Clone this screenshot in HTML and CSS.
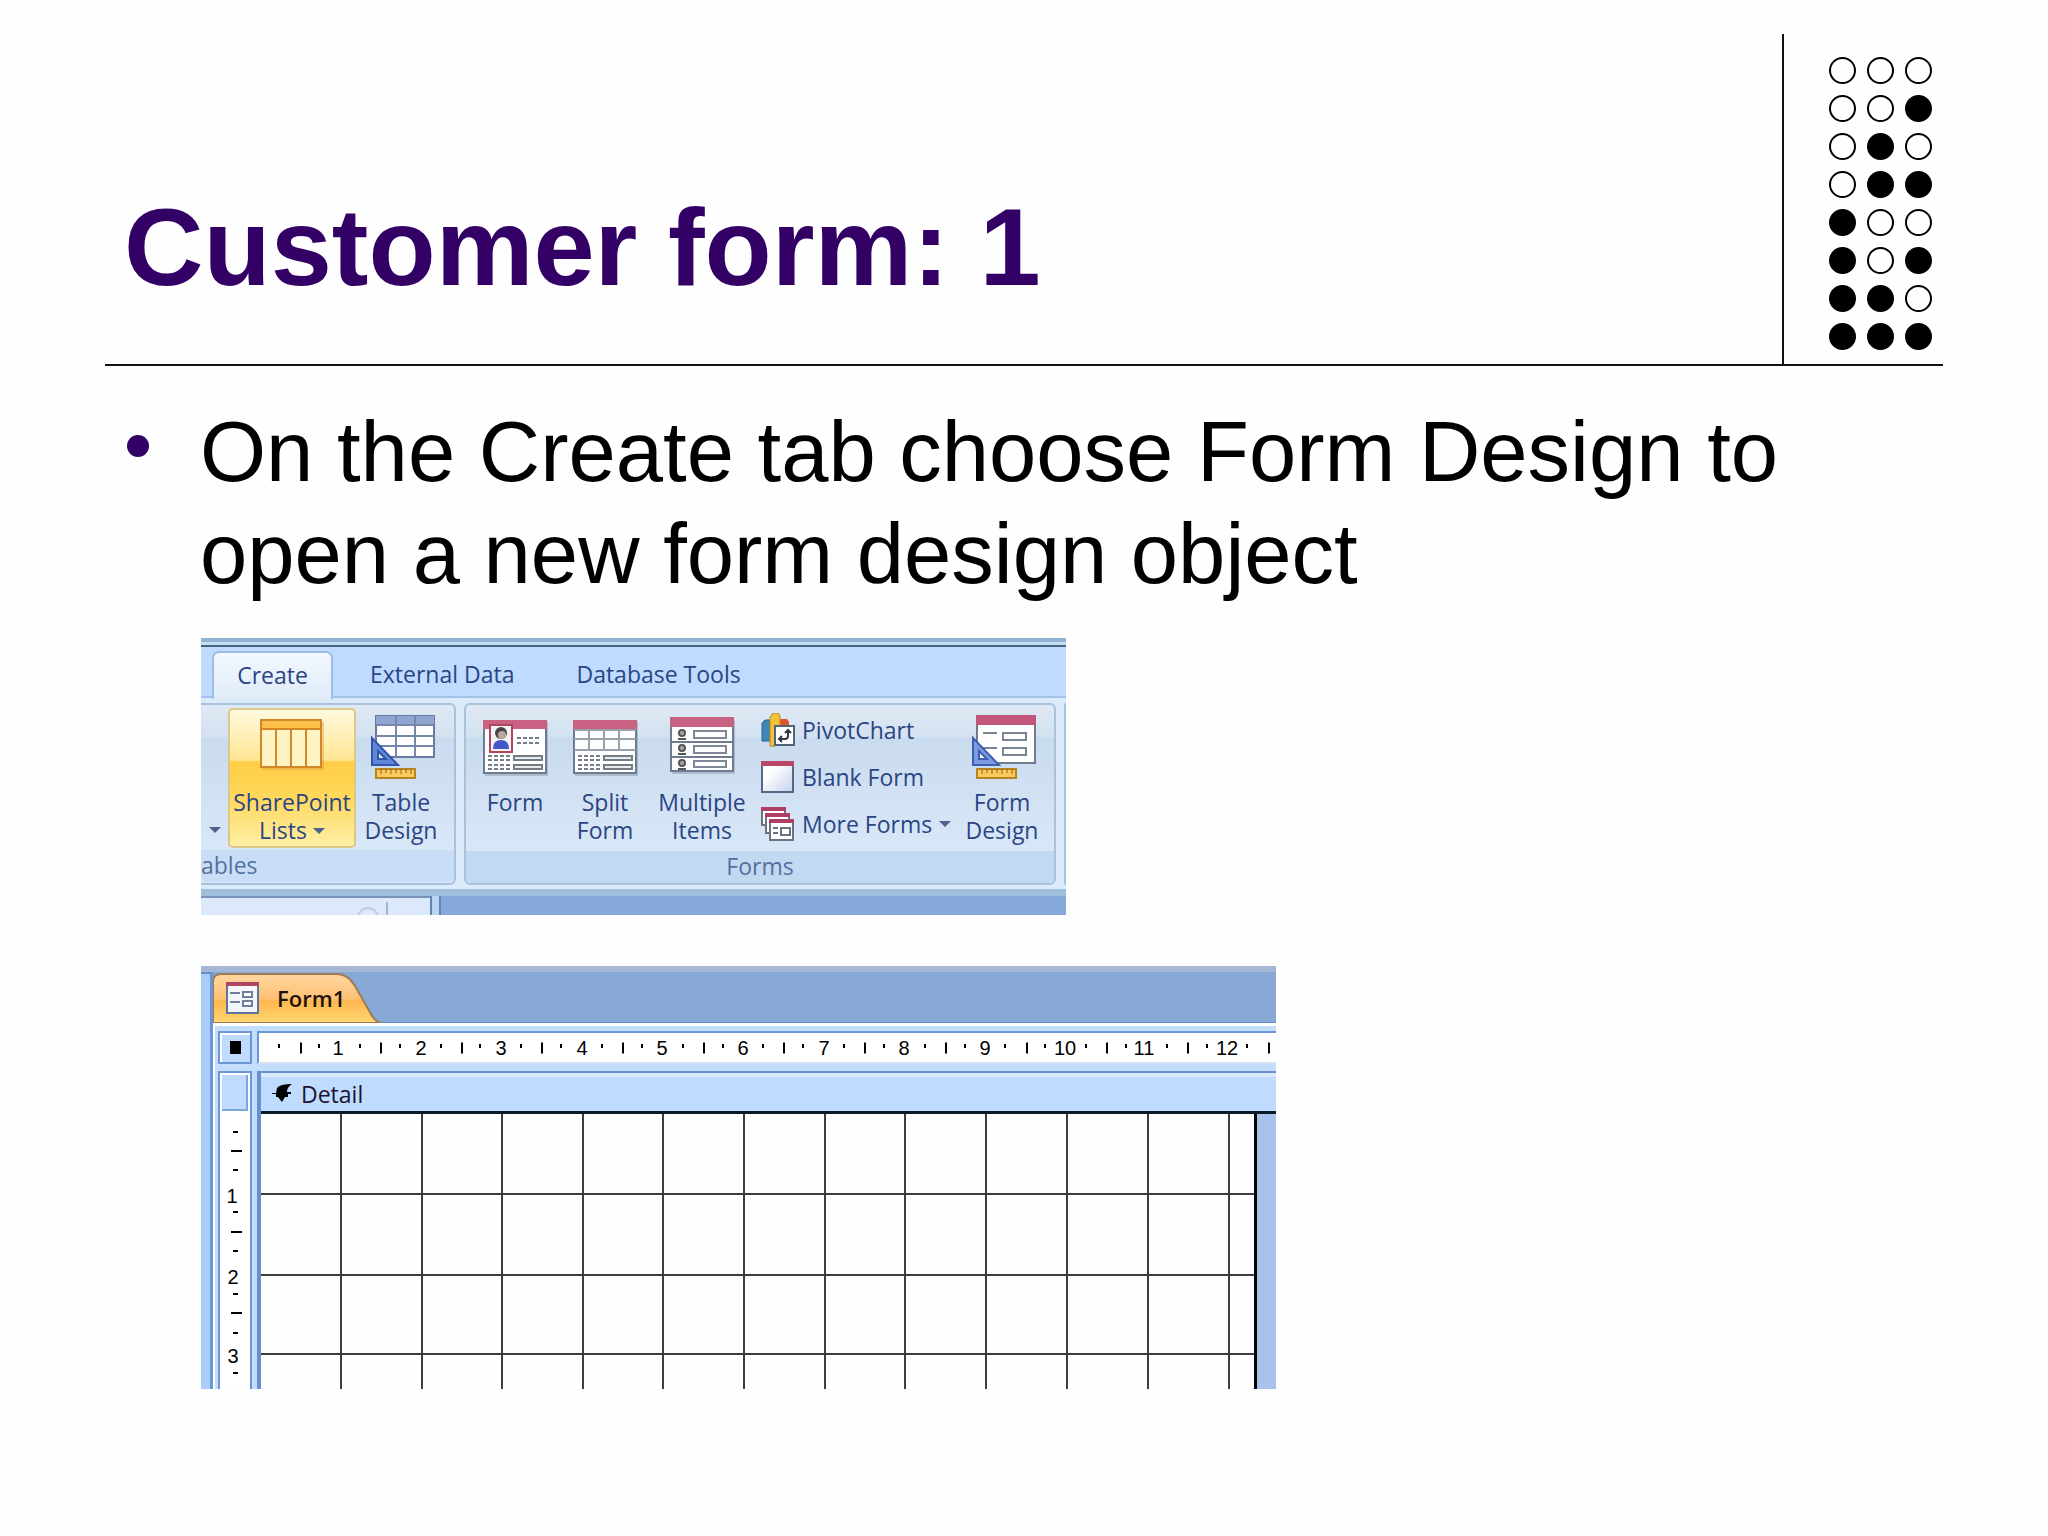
FILE: index.html
```html
<!DOCTYPE html>
<html lang="en">
<head>
    <meta charset="UTF-8">
    <meta name="viewport" content="width=device-width, initial-scale=1.0">
    <title>Customer form: 1</title>
    <link rel="stylesheet" href="styles.css">
</head>
<body>
    <header class="slide-header">
        <h1>Customer form: 1</h1>
        <div class="dots">
            <i></i><i></i><i></i>
            <i></i><i></i><i class="on"></i>
            <i></i><i class="on"></i><i></i>
            <i></i><i class="on"></i><i class="on"></i>
            <i class="on"></i><i></i><i></i>
            <i class="on"></i><i></i><i class="on"></i>
            <i class="on"></i><i class="on"></i><i></i>
            <i class="on"></i><i class="on"></i><i class="on"></i>
        </div>
    </header>

    <main>
        <ul class="points">
            <li>On the Create tab choose Form Design to open a new form design object</li>
        </ul>

        <!-- Ribbon -->
        <section class="ribbon">
            <div class="window-edge"></div>
            <nav class="tabs">
                <button class="tab active">Create</button>
                <button class="tab">External Data</button>
                <button class="tab">Database Tools</button>
            </nav>
            <div class="groups">
                <div class="group tables">
                    <div class="items">
                        <button class="big cut" aria-label="More tables"><span class="arrow"></span></button>
                        <button class="big sharepoint selected">
                            <svg width="80" height="80" viewBox="0 0 80 80">
                                <rect x="10" y="14" width="62" height="48" fill="#c98a3a" opacity=".35"/>
                                <rect x="9" y="12" width="60" height="47" fill="#fff3c4" stroke="#d2872a" stroke-width="2"/>
                                <rect x="10" y="13" width="58" height="8" fill="#fbc04a"/>
                                <path d="M9 21h60M24 21v38M39 21v38M54 21v38" stroke="#d2872a" stroke-width="2"/>
                            </svg>
                            <span>SharePoint<br>Lists <span class="arrow"></span></span>
                        </button>
                        <button class="big table-design">
                            <svg width="80" height="80" viewBox="0 0 80 80">
                                <rect x="15" y="8" width="58" height="41" fill="#fff" stroke="#66799f" stroke-width="2"/>
                                <rect x="15" y="8" width="58" height="9" fill="#8fa5cf"/>
                                <path d="M15 17h58M15 28h58M15 38h58M35 8v41M54 8v41" stroke="#7587aa" stroke-width="2"/>
                                <path d="M11 30v27h26z" fill="#5f86d8" stroke="#3456a8" stroke-width="2"/>
                                <path d="M17 43v8h8z" fill="#dfe9fb" stroke="#3456a8" stroke-width="2"/>
                                <rect x="15" y="61" width="39" height="9" fill="#fcc95c" stroke="#b98224" stroke-width="2"/>
                                <path d="M20 61v5M25 61v4M30 61v5M35 61v4M40 61v5M45 61v4M50 61v5" stroke="#8d6218" stroke-width="1"/>
                            </svg>
                            <span>Table<br>Design</span>
                        </button>
                    </div>
                    <div class="group-name">ables</div>
                </div>
                <div class="group forms">
                    <div class="items">
                        <button class="big">
                            <svg width="80" height="80" viewBox="0 0 80 80">
                                <rect x="10" y="14" width="63" height="54" fill="#8b97a8" opacity=".5"/>
                                <rect x="9" y="13" width="62" height="52" fill="#fff" stroke="#6f7c8f" stroke-width="2"/>
                                <rect x="8" y="12" width="64" height="9" fill="#c96282"/>
                                <rect x="15" y="17" width="22" height="27" fill="#f4f2f4" stroke="#b14560" stroke-width="2"/>
                                <path d="M18 41q0-9 8-9t8 9z" fill="#4358c8"/>
                                <circle cx="26" cy="25" r="6" fill="#4b4646"/>
                                <circle cx="27" cy="27" r="4" fill="#bba7a0"/>
                                <path d="M42 30h24M42 35h24M13 48h22M13 52h22M13 57h22M13 61h22" stroke="#747c88" stroke-width="2" stroke-dasharray="4 2"/>
                                <path d="M39 48h28v4H39zM39 57h28v4H39z" fill="#e8ebf0" stroke="#747c88" stroke-width="2"/>
                            </svg>
                            <span>Form</span>
                        </button>
                        <button class="big">
                            <svg width="80" height="80" viewBox="0 0 80 80">
                                <rect x="10" y="14" width="63" height="54" fill="#8b97a8" opacity=".5"/>
                                <rect x="9" y="13" width="62" height="52" fill="#fff" stroke="#6f7c8f" stroke-width="2"/>
                                <rect x="8" y="12" width="64" height="9" fill="#c96282"/>
                                <path d="M9 22h62M9 31h62M9 42h62M24 22v20M39 22v20M54 22v20" stroke="#98a0ab" stroke-width="2"/>
                                <path d="M13 48h22M13 52h22M13 57h22M13 61h22" stroke="#747c88" stroke-width="2" stroke-dasharray="4 2"/>
                                <path d="M39 48h28v4H39zM39 57h28v4H39z" fill="#e8ebf0" stroke="#747c88" stroke-width="2"/>
                            </svg>
                            <span>Split<br>Form</span>
                        </button>
                        <button class="big multiple">
                            <svg width="80" height="80" viewBox="0 0 80 80">
                                <rect x="10" y="12" width="63" height="54" fill="#8b97a8" opacity=".5"/>
                                <rect x="9" y="10" width="62" height="53" fill="#fff" stroke="#6f7c8f" stroke-width="2"/>
                                <rect x="8" y="9" width="64" height="10" fill="#c96282"/>
                                <path d="M9 34h62M9 49h62" stroke="#6f7c8f" stroke-width="2"/>
                                <path d="M32 23h32v7H32zM32 38h32v7H32zM32 53h32v6H32z" fill="#fff" stroke="#7e8896" stroke-width="2"/>
                                <g fill="#aaa" stroke="#55555a" stroke-width="2">
                                    <circle cx="20" cy="25" r="3"/><path d="M16 31h8"/>
                                    <circle cx="20" cy="40" r="3"/><path d="M16 46h8"/>
                                    <circle cx="20" cy="55" r="3"/><path d="M16 61h8"/>
                                </g>
                            </svg>
                            <span>Multiple<br>Items</span>
                        </button>
                        <div class="small-items">
                            <button class="small">
                                <svg width="34" height="34" viewBox="0 0 34 34">
                                    <path d="M1 10l3-3h5v21H1z" fill="#3f86b8" stroke="#27628f"/>
                                    <path d="M18 6h8l2 3v8H18z" fill="#e0532c"/>
                                    <path d="M9 4l3-4h5l2 3v27l-5 3H9z" fill="#f4c13a" stroke="#b98a22"/>
                                    <rect x="14" y="13" width="19" height="19" fill="#fff" stroke="#55637a" stroke-width="2"/>
                                    <path d="M19 26h5q3 0 3-3v-5M21 23l-3 3 3 3M24 20l3-3 3 3" fill="none" stroke="#33373f" stroke-width="2"/>
                                </svg>
                                PivotChart
                            </button>
                            <button class="small">
                                <svg width="34" height="34" viewBox="0 0 34 34">
                                    <defs><linearGradient id="paper" x1="0" y1="0" x2="1" y2="1"><stop offset=".3" stop-color="#fff"/><stop offset="1" stop-color="#c3d3ee"/></linearGradient></defs>
                                    <rect x="1" y="2" width="31" height="30" fill="url(#paper)" stroke="#566788" stroke-width="2"/>
                                    <rect x="0" y="1" width="33" height="5" fill="#b9476a"/>
                                </svg>
                                Blank Form
                            </button>
                            <button class="small">
                                <svg width="34" height="34" viewBox="0 0 34 34">
                                    <g fill="#fff" stroke="#6b7280" stroke-width="2">
                                        <path d="M1 1h23v17H1z"/><path d="M5 7h23v19H5z"/><path d="M9 13h23v20H9z"/>
                                    </g>
                                    <path d="M0 2h25M4 8h25M8 14h25" stroke="#b13f63" stroke-width="4"/>
                                    <path d="M12 21h5M12 26h5" stroke="#6b7280" stroke-width="2"/>
                                    <rect x="20" y="21" width="9" height="7" fill="#fff" stroke="#6b7280" stroke-width="2"/>
                                </svg>
                                More Forms <span class="arrow"></span>
                            </button>
                        </div>
                        <button class="big form-design">
                            <svg width="80" height="80" viewBox="0 0 80 80">
                                <rect x="15" y="8" width="58" height="47" fill="#fff" stroke="#6f7c8f" stroke-width="2"/>
                                <rect x="14" y="7" width="60" height="10" fill="#c2577b"/>
                                <path d="M21 25h14M21 40h14" stroke="#7b8492" stroke-width="2"/>
                                <path d="M41 25h23v7H41zM41 40h23v7H41z" fill="#fff" stroke="#7b8492" stroke-width="2"/>
                                <path d="M11 30v27h26z" fill="#7b9ae0" stroke="#3f5fb0" stroke-width="2"/>
                                <path d="M17 43v8h8z" fill="#fff" stroke="#3f5fb0" stroke-width="2"/>
                                <rect x="15" y="61" width="39" height="9" fill="#fcc95c" stroke="#b98224" stroke-width="2"/>
                                <path d="M20 61v5M25 61v4M30 61v5M35 61v4M40 61v5M45 61v4M50 61v5" stroke="#8d6218" stroke-width="1"/>
                            </svg>
                            <span>Form<br>Design</span>
                        </button>
                    </div>
                    <div class="group-name">Forms</div>
                </div>
                <div class="group next"></div>
            </div>
            <div class="below">
                <div class="pane">
                    <svg width="40" height="18" viewBox="0 0 40 18">
                        <circle cx="12" cy="20" r="10" fill="none" stroke="#bccbe0" stroke-width="2"/>
                        <path d="M31 4v14" stroke="#a3b6d0" stroke-width="2"/>
                    </svg>
                </div>
                <div class="splitter"></div>
            </div>
        </section>

        <!-- Form designer -->
        <section class="designer">
            <div class="side"></div>
            <div class="document">
                <div class="doc-tabs">
                    <button class="doc-tab">
                        <svg class="shape" width="168" height="51" viewBox="0 0 168 51">
                            <defs><linearGradient id="orange" x1="0" y1="0" x2="0" y2="1"><stop offset="0" stop-color="#ffd6a0"/><stop offset=".5" stop-color="#ffc175"/><stop offset=".55" stop-color="#ffb74f"/><stop offset="1" stop-color="#ffd873"/></linearGradient></defs>
                            <path d="M0 51V10q0-8 8-8h116q11 0 18 12l16 28q4 8 10 9z" fill="url(#orange)" stroke="#a07a50" stroke-width="2"/>
                        </svg>
                        <svg class="icon" width="33" height="33" viewBox="0 0 33 33">
                            <rect x="1" y="2" width="31" height="30" fill="#f3f6fc" stroke="#5f7299" stroke-width="2"/>
                            <rect x="0" y="1" width="33" height="4" fill="#b34362"/>
                            <path d="M4 12h10M4 21h10" stroke="#6f809f" stroke-width="2"/>
                            <path d="M17 11h9v5h-9zM17 20h9v5h-9z" fill="#fff" stroke="#6f809f" stroke-width="2"/>
                        </svg>
                        <span>Form1</span>
                    </button>
                </div>
                <div class="workspace">
                    <button class="corner" aria-label="Select form"><span></span></button>
                    <div class="ruler-top">
                        <svg width="1014" height="29" viewBox="0 0 1014 29">
                            <path d="M16 13h2M56 13h2M97 13h2M137 13h2M178 13h2M217 13h2M258 13h2M298 13h2M339 13h2M379 13h2M420 13h2M460 13h2M500 13h2M540 13h2M581 13h2M621 13h2M662 13h2M702 13h2M742 13h2M782 13h2M823 13h2M863 13h2M904 13h2M944 13h2M984 13h2" stroke="#000" stroke-width="4"/>
                            <path d="M38 15h2M118 15h2M199 15h2M279 15h2M360 15h2M441 15h2M521 15h2M602 15h2M683 15h2M764 15h2M844 15h2M925 15h2M1006 15h2" stroke="#000" stroke-width="11"/>
                            <g class="numbers">
                                <text x="76" y="22">1</text>
                                <text x="159" y="22">2</text>
                                <text x="239" y="22">3</text>
                                <text x="320" y="22">4</text>
                                <text x="400" y="22">5</text>
                                <text x="481" y="22">6</text>
                                <text x="562" y="22">7</text>
                                <text x="642" y="22">8</text>
                                <text x="723" y="22">9</text>
                                <text x="803" y="22">10</text>
                                <text x="882" y="22">11</text>
                                <text x="965" y="22">12</text>
                            </g>
                        </svg>
                    </div>
                    <div class="ruler-left">
                        <div class="section-handle"></div>
                        <svg width="30" height="276" viewBox="0 0 30 276">
                            <path d="M13 19h5M13 57h5M13 99h5M13 138h5M13 181h5M13 220h5M13 260h5" stroke="#000" stroke-width="2"/>
                            <path d="M11 38h11M11 119h11M11 200h11" stroke="#000" stroke-width="2"/>
                            <g class="numbers">
                                <text x="12" y="90">1</text>
                                <text x="13" y="171">2</text>
                                <text x="13" y="250">3</text>
                            </g>
                        </svg>
                    </div>
                    <div class="section">
                        <div class="detail">
                            <svg width="20" height="20" viewBox="0 0 20 20"><path d="M5 4q3-4 15-4-5 3-5 8h4v2h-3v3h-3l-3 5-4-5H4v-3H0V9h4z"/></svg>
                            Detail
                        </div>
                        <div class="canvas">
                            <svg width="993" height="275" viewBox="0 0 993 275">
                                <path d="M80 0v275M161 0v275M241 0v275M322 0v275M402 0v275M483 0v275M564 0v275M644 0v275M725 0v275M806 0v275M887 0v275M968 0v275M0 80h993M0 161h993M0 240h993" stroke="#3c3c3e" stroke-width="2"/>
                            </svg>
                        </div>
                    </div>
                </div>
            </div>
        </section>
    </main>
</body>
</html>
```
FILE: styles.css
```css
* {
    box-sizing: border-box;
}
body {
    margin: 0;
    padding: 34px 105px;
    background: #fefefe;
    color: #000;
    font-family: "Liberation Sans", Arial, sans-serif;
}
button {
    padding: 0;
    border: none;
    background: none;
    color: inherit;
    font: inherit;
    cursor: pointer;
}
svg {
    display: block;
}

/* Header */
.slide-header {
    display: flex;
    justify-content: space-between;
    align-items: flex-end;
    border-bottom: 2px solid #111;
}
h1 {
    margin: 0;
    padding: 0 0 53px 19px;
    font-size: 110px;
    line-height: 128px;
    color: #330066;
}
.dots {
    display: grid;
    grid-template-columns: repeat(3, 27px);
    gap: 11px;
    padding: 23px 11px 14px 45px;
    border-left: 2px solid #111;
}
.dots i {
    width: 27px;
    height: 27px;
    border: 2px solid #000;
    border-radius: 50%;
}
.dots .on {
    background: #000;
}

/* Bullet text */
.points {
    margin: 35px 0 33px;
    padding: 0 100px 0 22px;
    list-style: none;
    font-size: 85px;
    line-height: 102px;
}
.points li {
    display: flex;
    gap: 51px;
}
.points li::before {
    content: "";
    flex: none;
    width: 22px;
    height: 22px;
    margin-top: 34px;
    border-radius: 50%;
    background: #330066;
}

/* Ribbon */
.ribbon {
    width: fit-content;
    margin-left: 96px;
    overflow: hidden;
    background: #dcebfa;
    font-family: "Open Sans", "Noto Sans", sans-serif;
    font-size: 23px;
    line-height: 28px;
    color: #2b4583;
}
.window-edge {
    height: 9px;
    background: linear-gradient(#8fb2d2 4px, #c5dff2 4px, #c5dff2 7px, #46627f 7px);
}
.tabs {
    display: flex;
    height: 51px;
    padding: 4px 0 0 11px;
    background: #bfdbff;
    border-bottom: 2px solid #a3c3e8;
}
.tab {
    height: 48px;
    padding: 0 0 3px;
    margin-left: 62px;
}
.tab.active {
    width: 121px;
    margin: 0 -25px 0 0;
    background: linear-gradient(#f3f8fe, #dfebf9);
    border: 2px solid #9dbde4;
    border-bottom: none;
    border-radius: 7px 7px 0 0;
}
.groups {
    display: flex;
    gap: 8px;
    padding: 5px 0 4px;
}
.group {
    display: flex;
    flex-direction: column;
    background: linear-gradient(#dfe9f4, #d3e1f0 32px, #c9dbee 33px, #d9e8f8 146px);
    border: 2px solid #a9c2dc;
    border-radius: 6px;
}
.tables {
    border-left: none;
    border-radius: 0 6px 6px 0;
}
.next {
    width: 2px;
    border-right: none;
    border-radius: 6px 0 0 6px;
}
.items {
    display: flex;
    padding: 3px 4px 2px;
}
.tables .items {
    padding: 3px 8px 2px 0;
}
.big {
    display: flex;
    flex-direction: column;
    align-items: center;
    width: 90px;
    height: 140px;
}
.big.cut {
    width: 27px;
    justify-content: flex-end;
    padding-bottom: 15px;
}
.big.sharepoint {
    width: 128px;
}
.big.multiple {
    width: 104px;
}
.big.form-design {
    width: 96px;
}
.big.selected {
    background: linear-gradient(#fffae0, #ffe693 52px, #ffcd45 54px, #ffd85c 90px, #fff0a8);
    border-radius: 5px;
    box-shadow: inset 0 0 0 2px #dcc68a;
}
.arrow {
    display: inline-block;
    border: 6px solid transparent;
    border-top-color: #4c6389;
    border-bottom: none;
    vertical-align: 5px;
}
.small-items {
    width: 200px;
    padding-left: 7px;
}
.small {
    display: flex;
    align-items: center;
    gap: 7px;
    height: 47px;
    padding-bottom: 3px;
    white-space: nowrap;
}
.group-name {
    height: 32px;
    background: #c1d9f1;
    border-radius: 0 0 5px 5px;
    text-align: center;
    line-height: 30px;
    color: #54709f;
}
.tables .group-name {
    background: #c9def6;
    text-align: left;
}
.below {
    display: flex;
    height: 26px;
    background: #86a9da;
    border-top: 7px solid #9dbfd9;
}
.pane {
    display: flex;
    justify-content: flex-end;
    width: 229px;
    padding-right: 34px;
    background: #dce9fa;
    border-top: 2px solid #7892b8;
}
.splitter {
    width: 11px;
    background: #b9d5f6;
    border-left: 2px solid #6484b5;
    border-right: 2px solid #6484b5;
}

/* Form designer */
.designer {
    display: flex;
    width: fit-content;
    margin: 51px 0 0 96px;
    border-top: 6px solid #a6b6d5;
    overflow: hidden;
}
.side {
    width: 12px;
    background: #a9cdf8;
    border-top: 2px solid #5f8ecb;
    border-right: 3px solid #6797d6;
}
.doc-tabs {
    height: 51px;
    background: #88a9d6;
    border-bottom: 1px solid #5f8ecb;
}
.doc-tab {
    position: relative;
    display: flex;
    align-items: center;
    gap: 18px;
    width: 168px;
    height: 51px;
    padding-left: 13px;
    font-family: "Open Sans", "Noto Sans", sans-serif;
    font-size: 22px;
    font-weight: 600;
    color: #1c120a;
}
.doc-tab .shape {
    position: absolute;
    left: 0;
    top: 0;
}
.doc-tab .icon,
.doc-tab span {
    position: relative;
}
.workspace {
    display: grid;
    grid-template-columns: 34px auto;
    gap: 7px 5px;
    padding: 5px 0 0 3px;
    background: #c2defc;
    border-top: 3px solid #fff;
    border-left: 2px solid #fff;
}
.corner {
    display: flex;
    align-items: center;
    justify-content: center;
    height: 33px;
    background: #c0dbff;
    border: 2px solid #6c97d6;
    box-shadow: inset 2px 2px #fff;
}
.corner span {
    width: 11px;
    height: 13px;
    background: #000;
}
.ruler-top {
    height: 33px;
    background: #fff;
    border-top: 2px solid #6c97d6;
    border-left: 2px solid #6c97d6;
    border-bottom: 2px solid #d4e0f4;
    padding-left: 3px;
}
.numbers {
    font-family: "Liberation Sans", Arial, sans-serif;
    font-size: 20px;
    text-anchor: middle;
}
.ruler-left {
    background: #fff;
    border: 2px solid #6c97d6;
    border-bottom: none;
}
.section-handle {
    height: 40px;
    background: #c0dbff;
    border: 2px solid #fff;
    box-shadow: inset -2px -2px #7fa5da;
}
.section {
    border-left: 4px solid #6790cc;
    border-top: 2px solid #6790cc;
}
.detail {
    display: flex;
    align-items: center;
    gap: 9px;
    height: 41px;
    padding-left: 11px;
    background: #bfdbff;
    border-top: 4px solid #dbe7fb;
    border-bottom: 3px solid #0d1a28;
    font-family: "Open Sans", "Noto Sans", sans-serif;
    font-size: 23px;
    line-height: 28px;
    color: #1c1430;
}
.canvas {
    background: #a8c3eb;
}
.canvas svg {
    box-sizing: content-box;
    background: #fefefe;
    border-right: 3px solid #000;
}
```
